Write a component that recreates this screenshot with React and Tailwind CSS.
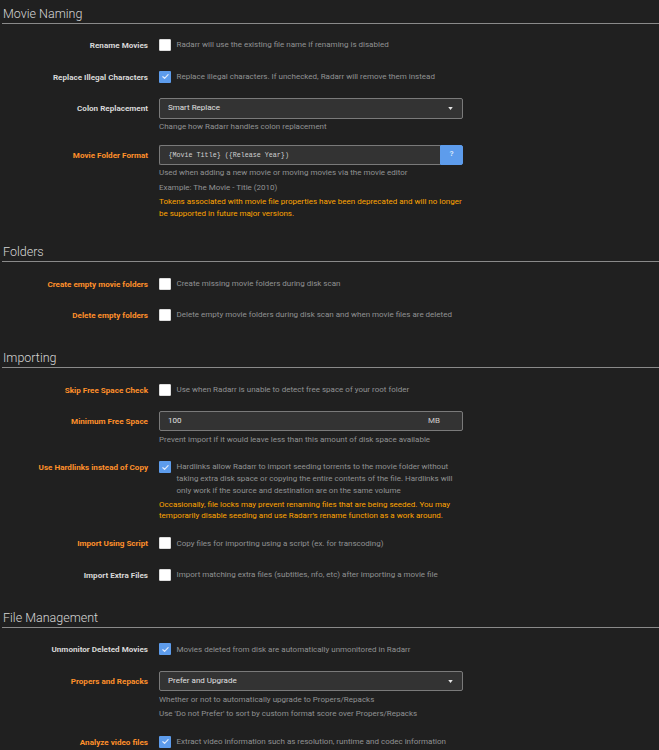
import React from 'react';

const ORANGE = 'text-[#ff902b]';
const LABEL = 'text-[#d8d8d8]';

const sections = [
  {
    title: 'Movie Naming',
    rows: [
      { label: 'Rename Movies', type: 'check', checked: false, help: 'Radarr will use the existing file name if renaming is disabled' },
      { label: 'Replace Illegal Characters', type: 'check', checked: true, help: 'Replace illegal characters. If unchecked, Radarr will remove them instead' },
      { label: 'Colon Replacement', type: 'select', value: 'Smart Replace', help: ['Change how Radarr handles colon replacement'] },
      {
        label: 'Movie Folder Format',
        advanced: true,
        type: 'format',
        value: '{Movie Title} ({Release Year})',
        help: ['Used when adding a new movie or moving movies via the movie editor', 'Example: The Movie - Title (2010)'],
        warning: 'Tokens associated with movie file properties have been deprecated and will no longer be supported in future major versions.',
      },
    ],
  },
  {
    title: 'Folders',
    rows: [
      { label: 'Create empty movie folders', advanced: true, type: 'check', checked: false, help: 'Create missing movie folders during disk scan' },
      { label: 'Delete empty folders', advanced: true, type: 'check', checked: false, help: 'Delete empty movie folders during disk scan and when movie files are deleted' },
    ],
  },
  {
    title: 'Importing',
    rows: [
      { label: 'Skip Free Space Check', advanced: true, type: 'check', checked: false, help: 'Use when Radarr is unable to detect free space of your root folder' },
      { label: 'Minimum Free Space', advanced: true, type: 'number', value: '100', unit: 'MB', help: ['Prevent import if it would leave less than this amount of disk space available'] },
      {
        label: 'Use Hardlinks instead of Copy',
        advanced: true,
        type: 'check',
        checked: true,
        help: 'Hardlinks allow Radarr to import seeding torrents to the movie folder without taking extra disk space or copying the entire contents of the file. Hardlinks will only work if the source and destination are on the same volume',
        warning: "Occasionally, file locks may prevent renaming files that are being seeded. You may temporarily disable seeding and use Radarr's rename function as a work around.",
      },
      { label: 'Import Using Script', advanced: true, type: 'check', checked: false, help: 'Copy files for importing using a script (ex. for transcoding)' },
      { label: 'Import Extra Files', type: 'check', checked: false, help: 'Import matching extra files (subtitles, nfo, etc) after importing a movie file' },
    ],
  },
  {
    title: 'File Management',
    rows: [
      { label: 'Unmonitor Deleted Movies', type: 'check', checked: true, help: 'Movies deleted from disk are automatically unmonitored in Radarr' },
      {
        label: 'Propers and Repacks',
        advanced: true,
        type: 'select',
        value: 'Prefer and Upgrade',
        help: ['Whether or not to automatically upgrade to Propers/Repacks', "Use 'Do not Prefer' to sort by custom format score over Propers/Repacks"],
      },
      {
        label: 'Analyze video files',
        advanced: true,
        type: 'check',
        checked: true,
        help: 'Extract video information such as resolution, runtime and codec information from files. This requires Radarr to read parts of the file which may cause high disk or network activity during scans.',
      },
    ],
  },
];

function Checkbox({ checked }) {
  if (checked) {
    return (
      <span className="flex h-[12px] w-[12px] items-center justify-center rounded-[1px] bg-[#5d9cec]">
        <svg viewBox="0 0 12 12" className="h-[9px] w-[9px]" fill="none" stroke="#dfeafb" strokeWidth="1.6" strokeLinecap="round" strokeLinejoin="round">
          <path d="M2.5 6.3l2.3 2.2 4.7-5" />
        </svg>
      </span>
    );
  }
  return <span className="block h-[12px] w-[12px] rounded-[1px] border border-[#dddddd] bg-white" />;
}

function HelpLine({ children, warning }) {
  return (
    <div className={`mt-[2.5px] text-[8px] ${warning ? 'leading-[11.5px] text-[#ffa500]' : 'leading-[12px] text-[#909293]'}`}>
      {children}
    </div>
  );
}

function Control({ row }) {
  if (row.type === 'check') {
    return (
      <div className="flex items-start">
        <div className="flex h-[20px] shrink-0 items-center">
          <Checkbox checked={row.checked} />
        </div>
        <div className="ml-[5.5px] pt-[4.2px] text-[8px] leading-[11.7px] text-[#909293]">{row.help}</div>
      </div>
    );
  }
  if (row.type === 'select') {
    return (
      <div className="flex h-[20.5px] items-center justify-between rounded-[2px] border border-[#7a7a7a] bg-[#333333] pl-[8px] pr-[9px] text-[8px] text-[#e0e0e0]">
        <span>{row.value}</span>
        <svg viewBox="0 0 6 4" className="h-[3px] w-[5px]" fill="#e6e6e6">
          <path d="M0 0h6L3 4z" />
        </svg>
      </div>
    );
  }
  if (row.type === 'format') {
    return (
      <div className="flex h-[20px]">
        <div className="flex flex-1 items-center rounded-l-[2px] border border-r-0 border-[#7a7a7a] bg-[#333333] pl-[8.5px] font-['Liberation_Mono',monospace] text-[6.7px] text-[#d0d0d0]">
          {row.value}
        </div>
        <div className="flex w-[23px] items-center justify-center rounded-r-[2px] border border-[#5d9cec] bg-[#5d9cec] font-['Liberation_Mono',monospace] text-[7px] font-bold text-[#dce9fb]">
          ?
        </div>
      </div>
    );
  }
  return (
    <div className="flex h-[20px] items-center justify-between rounded-[2px] border border-[#7a7a7a] bg-[#333333] pl-[8px] pr-[22px] text-[8px] text-[#e0e0e0]">
      <span>{row.value}</span>
      <span className="text-[#cccccc]">{row.unit}</span>
    </div>
  );
}

function FormGroup({ row }) {
  const helpLines = row.type === 'check' ? [] : row.help || [];
  return (
    <div className="mb-[11.5px] flex">
      <div
        className={`flex h-[20px] w-[146px] shrink-0 items-center justify-end text-right text-[8.1px] font-bold ${row.advanced ? ORANGE : LABEL}`}
      >
        {row.label}
      </div>
      <div className="ml-[11px] w-[304px]">
        <Control row={row} />
        {helpLines.map((line) => (
          <HelpLine key={line}>{line}</HelpLine>
        ))}
        {row.warning && <HelpLine warning>{row.warning}</HelpLine>}
      </div>
    </div>
  );
}

export default function App() {
  return (
    <div className="min-h-screen bg-[#202020] pl-[2px] pt-[3.7px] font-['Roboto',sans-serif]">
      {sections.map((section) => (
        <div key={section.title} className="mb-[23px]">
          <div className="mb-[11.5px] border-b border-[#8a8a8a] pl-[1px] text-[12.5px] font-light leading-[19px] text-[#d6d6d6]">
            {section.title}
          </div>
          {section.rows.map((row) => (
            <FormGroup key={row.label} row={row} />
          ))}
        </div>
      ))}
    </div>
  );
}
